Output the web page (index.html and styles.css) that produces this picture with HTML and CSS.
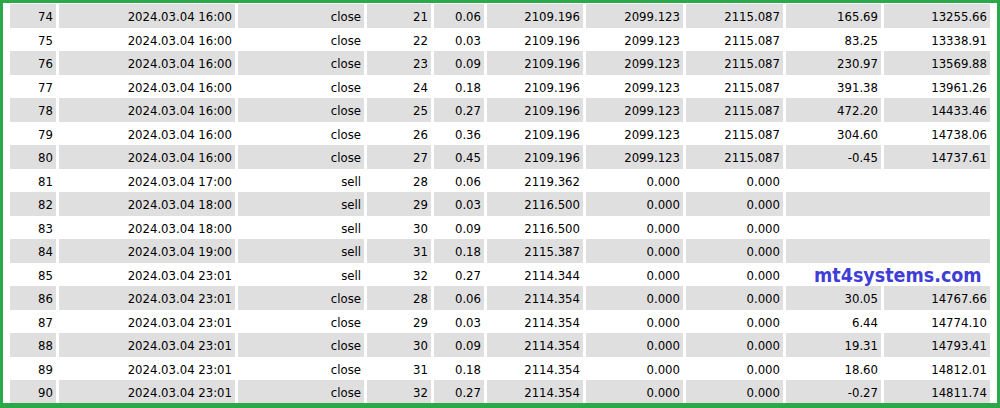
FILE: index.html
```html
<!DOCTYPE html>
<html>
<head>
<meta charset="utf-8">
<link rel="stylesheet" href="styles.css">
</head>
<body>
<div class="frame">
<table class="report">
<colgroup>
<col class="c1"><col class="c2"><col class="c3"><col class="c4"><col class="c5"><col class="c6"><col class="c7"><col class="c8"><col class="c9"><col class="c10">
</colgroup>
<tr class="alt"><td>74</td><td>2024.03.04 16:00</td><td>close</td><td>21</td><td>0.06</td><td>2109.196</td><td>2099.123</td><td>2115.087</td><td>165.69</td><td>13255.66</td></tr>
<tr><td>75</td><td>2024.03.04 16:00</td><td>close</td><td>22</td><td>0.03</td><td>2109.196</td><td>2099.123</td><td>2115.087</td><td>83.25</td><td>13338.91</td></tr>
<tr class="alt"><td>76</td><td>2024.03.04 16:00</td><td>close</td><td>23</td><td>0.09</td><td>2109.196</td><td>2099.123</td><td>2115.087</td><td>230.97</td><td>13569.88</td></tr>
<tr><td>77</td><td>2024.03.04 16:00</td><td>close</td><td>24</td><td>0.18</td><td>2109.196</td><td>2099.123</td><td>2115.087</td><td>391.38</td><td>13961.26</td></tr>
<tr class="alt"><td>78</td><td>2024.03.04 16:00</td><td>close</td><td>25</td><td>0.27</td><td>2109.196</td><td>2099.123</td><td>2115.087</td><td>472.20</td><td>14433.46</td></tr>
<tr><td>79</td><td>2024.03.04 16:00</td><td>close</td><td>26</td><td>0.36</td><td>2109.196</td><td>2099.123</td><td>2115.087</td><td>304.60</td><td>14738.06</td></tr>
<tr class="alt"><td>80</td><td>2024.03.04 16:00</td><td>close</td><td>27</td><td>0.45</td><td>2109.196</td><td>2099.123</td><td>2115.087</td><td>-0.45</td><td>14737.61</td></tr>
<tr><td>81</td><td>2024.03.04 17:00</td><td>sell</td><td>28</td><td>0.06</td><td>2119.362</td><td>0.000</td><td>0.000</td><td colspan="2"></td></tr>
<tr class="alt"><td>82</td><td>2024.03.04 18:00</td><td>sell</td><td>29</td><td>0.03</td><td>2116.500</td><td>0.000</td><td>0.000</td><td colspan="2"></td></tr>
<tr><td>83</td><td>2024.03.04 18:00</td><td>sell</td><td>30</td><td>0.09</td><td>2116.500</td><td>0.000</td><td>0.000</td><td colspan="2"></td></tr>
<tr class="alt"><td>84</td><td>2024.03.04 19:00</td><td>sell</td><td>31</td><td>0.18</td><td>2115.387</td><td>0.000</td><td>0.000</td><td colspan="2"></td></tr>
<tr><td>85</td><td>2024.03.04 23:01</td><td>sell</td><td>32</td><td>0.27</td><td>2114.344</td><td>0.000</td><td>0.000</td><td colspan="2"></td></tr>
<tr class="alt"><td>86</td><td>2024.03.04 23:01</td><td>close</td><td>28</td><td>0.06</td><td>2114.354</td><td>0.000</td><td>0.000</td><td>30.05</td><td>14767.66</td></tr>
<tr><td>87</td><td>2024.03.04 23:01</td><td>close</td><td>29</td><td>0.03</td><td>2114.354</td><td>0.000</td><td>0.000</td><td>6.44</td><td>14774.10</td></tr>
<tr class="alt"><td>88</td><td>2024.03.04 23:01</td><td>close</td><td>30</td><td>0.09</td><td>2114.354</td><td>0.000</td><td>0.000</td><td>19.31</td><td>14793.41</td></tr>
<tr><td>89</td><td>2024.03.04 23:01</td><td>close</td><td>31</td><td>0.18</td><td>2114.354</td><td>0.000</td><td>0.000</td><td>18.60</td><td>14812.01</td></tr>
<tr class="alt"><td>90</td><td>2024.03.04 23:01</td><td>close</td><td>32</td><td>0.27</td><td>2114.354</td><td>0.000</td><td>0.000</td><td>-0.27</td><td>14811.74</td></tr>
</table>
<div class="watermark">mt4systems.com</div>
</div>
</body>
</html>
```

FILE: styles.css
```css
html, body {
  margin: 0;
  padding: 0;
  background: #ffffff;
}

.frame {
  position: relative;
  box-sizing: border-box;
  width: 1000px;
  height: 408px;
  overflow: hidden;
  border: 3px solid #2aa84a;
  border-bottom-width: 5px;
  padding: 1px 0 0 4px;
  background: #ffffff;
}

.report {
  table-layout: fixed;
  border-collapse: separate;
  border-spacing: 3px 0;
  font-family: "DejaVu Sans Condensed", "DejaVu Sans", sans-serif;
  font-size: 13px;
  color: #000000;
}

.c1 { width: 46px; }
.c2 { width: 176px; }
.c3 { width: 126px; }
.c4 { width: 64px; }
.c5 { width: 50px; }
.c6 { width: 96px; }
.c7 { width: 97px; }
.c8 { width: 97px; }
.c9 { width: 95px; }
.c10 { width: 106px; }

.report td {
  height: 23.5px;
  padding: 2px 3px 0 0;
  box-sizing: border-box;
  text-align: right;
  white-space: nowrap;
  line-height: 21px;
}

.report tr.alt td {
  background: #dfdfdf;
}

.watermark {
  position: absolute;
  left: 811px;
  top: 261px;
  font-family: "DejaVu Sans Condensed", "DejaVu Sans", sans-serif;
  font-weight: bold;
  font-size: 19.5px;
  color: #3e3ed6;
}
```
